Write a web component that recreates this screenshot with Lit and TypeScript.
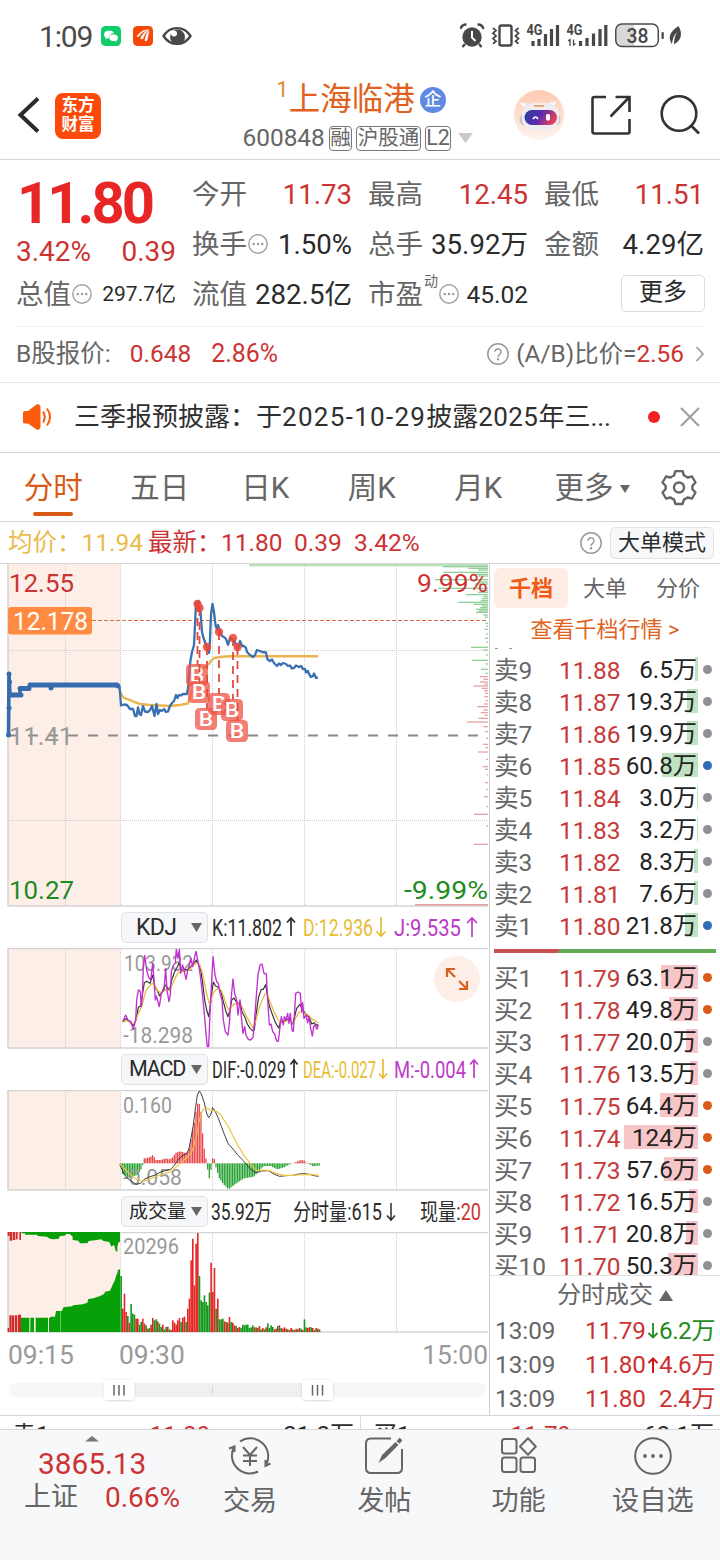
import { LitElement, html, svg, css } from "lit";
import { customElement } from "lit/decorators.js";
import { classMap } from "lit/directives/class-map.js";

type Row = [string, string, string, number, string];

const SELLS: Row[] = [
  ["卖9", "11.88", "6.5万", 3, "g"],
  ["卖8", "11.87", "19.3万", 11, "g"],
  ["卖7", "11.86", "19.9万", 11, "g"],
  ["卖6", "11.85", "60.8万", 36, "b"],
  ["卖5", "11.84", "3.0万", 1, "g"],
  ["卖4", "11.83", "3.2万", 1, "g"],
  ["卖3", "11.82", "8.3万", 4, "g"],
  ["卖2", "11.81", "7.6万", 4, "g"],
  ["卖1", "11.80", "21.8万", 13, "b"],
];
const BUYS: Row[] = [
  ["买1", "11.79", "63.1万", 37, "o"],
  ["买2", "11.78", "49.8万", 29, "o"],
  ["买3", "11.77", "20.0万", 12, "g"],
  ["买4", "11.76", "13.5万", 8, "g"],
  ["买5", "11.75", "64.4万", 38, "o"],
  ["买6", "11.74", "124万", 74, "o"],
  ["买7", "11.73", "57.6万", 34, "o"],
  ["买8", "11.72", "16.5万", 9, "g"],
  ["买9", "11.71", "20.8万", 12, "g"],
  ["买10", "11.70", "50.3万", 30, "g"],
];

const DEPTH_GREEN = [
  [20, 136], [25, 59], [30, 30], [37, 134], [43, 50], [48, 30], [59, 159], [66, 25], [72, 40], [85, 150],
  [92, 20], [97, 30], [104, 66], [110, 14], [116, 19], [122, 22], [127, 89], [133, 42], [138, 18], [143, 24],
  [148, 36], [153, 28], [157, 36], [165, 14], [172, 10], [190, 8], [198, 6], [208, 10], [222, 6], [235, 9],
  [246, 6], [262, 51], [270, 14], [285, 6], [301, 48], [312, 8], [328, 21], [340, 8],
];
const DEPTH_RED = [
  [350, 24], [358, 14], [366, 24], [372, 10], [378, 44], [385, 19], [392, 12], [400, 9], [410, 12], [422, 8],
  [432, 12], [440, 32], [450, 14], [458, 22], [466, 10], [475, 29], [486, 63], [500, 14], [515, 9], [535, 6],
  [553, 14], [563, 8], [576, 30], [598, 6], [620, 16], [628, 9], [645, 4], [668, 9], [688, 5], [710, 12],
  [740, 5], [763, 42], [798, 6], [853, 42],
];

/* KDJ curves, in thirds of a pixel */
const J_LINE =
  "68,365 77,345 85,362 92,364 100,388 107,360 110,300 115,270 121,274 124,320 127,290 130,200 134,166 140,210 146,232 152,240 158,190 161,225 166,300 169,288 178,320 184,280 192,270 197,205 201,270 207,305 211,285 214,215 220,195 226,190 229,148 234,175 238,148 242,220 248,195 253,215 258,238 263,212 268,195 273,175 278,200 282,180 288,154 294,185 300,220 306,270 312,330 318,400 322,440 326,440 330,340 335,240 339,170 345,225 350,245 355,250 360,280 366,300 370,360 376,395 384,405 388,370 393,300 399,237 404,280 410,300 414,345 420,300 424,350 429,400 434,380 438,405 445,418 452,420 459,412 463,370 468,300 474,225 480,195 486,192 492,220 499,222 503,300 508,375 513,372 518,395 524,402 530,423 535,424 539,390 544,350 550,375 553,350 558,360 563,340 567,370 571,340 576,390 580,395 584,330 587,280 594,276 601,280 605,335 608,308 612,355 618,345 623,368 627,350 632,385 637,408 641,380 645,374 651,388 655,375";
const K_LINE =
  "68,365 78,356 90,366 100,376 108,360 115,322 122,318 127,285 133,248 140,244 150,250 158,225 165,262 172,272 179,288 187,275 195,255 202,262 208,272 216,238 224,215 232,200 238,188 245,212 252,208 262,210 272,200 282,190 289,180 296,192 302,208 308,250 314,300 320,330 326,350 330,325 335,280 340,246 347,258 355,262 364,278 370,305 378,335 384,350 390,330 395,300 402,294 408,304 415,312 420,305 426,335 434,350 442,372 450,385 458,392 463,390 468,345 476,290 484,268 490,268 497,254 502,285 508,318 516,340 524,362 532,378 537,384 541,365 548,368 555,362 563,358 571,362 578,372 584,350 590,325 600,313 606,326 612,335 620,345 628,352 635,372 642,368 650,376 655,374";
const D_LINE =
  "68,366 80,362 92,366 102,372 112,348 124,322 130,300 138,272 148,258 158,250 165,256 172,272 182,278 192,272 200,268 208,272 216,256 224,238 234,218 244,214 256,214 268,210 280,196 290,188 300,196 308,222 316,262 322,290 328,310 333,300 340,278 348,270 356,264 364,272 372,292 380,318 388,332 394,322 402,312 410,312 420,308 430,328 440,350 450,368 460,384 468,360 478,322 486,302 495,282 502,280 508,300 516,320 526,344 536,362 545,368 556,364 568,362 580,370 588,352 598,336 606,338 616,340 626,346 636,358 646,362 655,370";

const PRICE =
  "119.5,686 121,705.500 124,704.500 127,705 130,709 133,709 135,716 136.500,716 138,707.500 139.500,714 141,715 143,706 145,711.500 148,712 150,710 152,706 153.500,712 154.500,716 156.500,704 158,714 160,710 162,711 164,709 166,712 168,711.500 170,706 172,703 174,701 176,695 177.500,698 179,695 181,695.500 183,694 187,694 188,688 189.500,670 190.500,660 192,652 194,645 195,625 196,603 198.500,601 200.500,612 202,632 203.500,638 206,645 208,650 209,653 210,640 211,614 212.500,604 214,612 215.500,625 217,630 218,625 220,632 222,636 224,637 226,639 228,645 230,638 232,639 234,640 236,645 238,649 240,641 242,646 244,646 246,648 247,652 250,655 253,657 255,655 257,650 260,651 262,652 266,652.500 267.500,659.500 270,661 272,659.500 274,663 277,666 279,663.500 281,665 283,663 286,664 288,666 290,665.500 292,668.500 294,668 296,665.500 299,667 301,666 303,669 305,669 306,672.500 308,671 309,674 311,677 313,676 314,673.500 316,678 318,677.500";

/* Bar height and direction in thirds of a pixel, one bar each 5 units from x = 361 */
const VOLUME =
  "168g 70r 115r 60r 48g 28r 84g 55g 52g 40r 40r 22g 30g 40r 25r 20g 10r 12g 22r 42r 35g 38g 32r 25g 15g 22r 8g 15g 16r 8g 6r 35r 28r 22r 35r 42r 30g 43r 46r 30g 70r 100r 215r 280r 140r 265r 297r 168g 95g 90g 110g 90g 80g 118g 208r 120r 192r 70g 100r 38g 38g 40g 32r 30r 28g 45r 30g 28r 20r 18g 12r 15r 12g 22g 20g 22g 22g 12g 14g 20g 14r 14g 12r 18r 8g 12r 8g 14r 26g 12g 20g 15g 8r 10r 18g 20r 12g 10r 14r 10r 8g 6r 12r 8g 6r 10r 8g 12r 10g 6r 38g 14g 12r 15r 14g 12r 6g 12r 10g 8r"
    .split(" ")
    .map((s, i) => ({ x: 361 + i * 5, h: parseInt(s, 10), up: s.endsWith("r") }));

const MACD_KNOTS = [
  [359, -4], [366, -32], [375, -38], [392, -46], [400, -38], [410, -35], [424, -14], [427, 0], [431, 15], [440, 16],
  [450, 20], [458, 26], [464, 10], [480, 10], [496, 15], [506, 12], [516, 18], [526, 32], [540, 36], [558, 30],
  [566, 45], [575, 95], [583, 130], [589, 180], [596, 178], [602, 150], [608, 60], [615, 22], [619, -8], [626, -45],
  [632, -14], [634, 10], [638, 20], [644, 6], [646, -12], [656, -45], [668, -62], [684, -78], [700, -65], [730, -45],
  [760, -40], [775, -22], [790, -8], [810, -8], [830, -18], [850, -12], [865, -4], [876, 0], [884, 3], [900, 10],
  [912, 8], [918, 0], [928, -3], [938, -9], [958, -6],
];
const macdBars = () => {
  const out: { x: number; h: number }[] = [];
  for (let x = 361; x < 958; x += 5) {
    const i = MACD_KNOTS.findIndex((k) => k[0] > x);
    const [x0, h0] = MACD_KNOTS[i - 1];
    const [x1, h1] = MACD_KNOTS[i];
    out.push({ x, h: h0 + ((h1 - h0) * (x - x0)) / (x1 - x0) });
  }
  return out;
};

const MARKS = [
  [197.5, 604, 197, 675], [199.5, 608, 199, 692], [207, 647, 206, 719],
  [219, 632, 219, 704], [233, 638, 232, 710], [237.5, 647, 237, 731],
];

const vGrid = (top: number, bottom: number) => svg`
  ${[65.5, 120.5, 212.5, 304.5, 396.5].map(
    (x) => svg`<line class="grid" x1=${x} x2=${x} y1=${top} y2=${bottom} />`,
  )}`;

const fitted = (x: number, y: number, len: number, cls: string, text: string) => svg`
  <text class=${cls} x=${x} y=${y} textLength=${len} lengthAdjust="spacingAndGlyphs">${text}</text>`;

const ellipsisIcon = html`<svg class="dots" viewBox="0 0 22 22">
  <circle cx="11" cy="11" r="9.200" fill="none" stroke="#a2a2a2" stroke-width="1.400" />
  <circle cx="6.700" cy="11" r="1.200" /><circle cx="11" cy="11" r="1.200" /><circle cx="15.300" cy="11" r="1.200" />
</svg>`;

const helpIcon = html`<svg class="help" viewBox="0 0 24 24" fill="none" stroke="#999" stroke-width="1.500">
  <circle cx="12" cy="12" r="10.200" />
  <path d="M9 9.800a3 3 0 1 1 4.700 2.500c-1.200.8-1.700 1.300-1.700 2.600" />
  <circle cx="12" cy="17.300" r=".5" fill="#999" />
</svg>`;

@customElement("app-root")
export class AppRoot extends LitElement {
  static styles = css`
    :host {
      display: block;
      width: 720px;
      height: 1560px;
      overflow: hidden;
      background: #fff;
      color: #666;
      font-family: Roboto, "Noto Sans CJK SC", sans-serif;
      font-size: 27px;
      line-height: 1;
    }
    * { box-sizing: border-box; }
    svg { display: block; flex: none; }
    .row { display: flex; align-items: center; white-space: nowrap; }
    .red { color: #cc3333; }
    .dark { color: #2b2b2b; }
    .grow { flex: 1; }

    .status { height: 72px; padding: 0 38px 0 39px; color: #4a4a4a; }
    .clock { width: 62px; padding-top: 1px; font-size: 30px; letter-spacing: -1.200px; }

    .header { height: 88px; padding-left: 16px; border-bottom: 1px solid #d6d6d6; }
    .logo {
      display: grid;
      place-content: center;
      width: 46px;
      height: 46px;
      margin-left: 14px;
      border-radius: 8px;
      background: #fc4a0b;
      color: #fff;
      font-size: 16.500px;
      font-weight: 700;
      line-height: 18.500px;
    }
    .title { display: flex; flex-direction: column; align-items: center; width: 301px; margin-left: 108px; }
    .name { display: flex; align-items: center; height: 42px; padding: 2px 0 0 3px; color: #e0601c; font-size: 31.500px; }
    .name sup { align-self: flex-start; margin: -1px 0 0 0; font-size: 22px; line-height: 1; color: #e08a30; }
    .badge { width: 26px; height: 26px; margin-left: 5px; border-radius: 50%; background: #6089e2; color: #fff; font-size: 17px; font-weight: 500; text-align: center; line-height: 25px; }
    .codes { display: flex; align-items: center; gap: 4px; height: 34px; padding: 3px 3px 0 0; font-size: 24.400px; }
    .codes b { font-weight: 400; font-size: 20.500px; line-height: 22px; padding: 0 .5px; border: 1.500px solid #777; border-radius: 4px; height: 25px; }
    .codes .l2 { font-size: 21.500px; }

    .quote { display: grid; grid-template-columns: repeat(4, 160px); column-gap: 16px; height: 166px; margin-left: 16px; padding-top: 9px; }
    .cell { display: flex; align-items: center; justify-content: space-between; height: 50px; white-space: nowrap; font-size: 27.600px; }
    .cell.main { height: 66px; }
    .cell.change { height: 34px; color: #cc3333; font-size: 28px; }
    .cell .v { padding-top: 1px; }
    .price { padding: 1px 0 0 1px; color: #e92626; font-size: 58px; font-weight: 700; letter-spacing: -3px; }
    .cell .label { display: flex; align-items: center; padding-top: 1px; font-size: 27.500px; }
    .cell .sm { font-size: 21px; }
    .cell .md { font-size: 24.500px; padding-top: 2px; }
    .label sup { align-self: flex-start; font-size: 14px; line-height: 1; margin: -7px 0 0 1px; }
    .dots { width: 22px; height: 22px; margin-top: -2px; fill: #999; }
    .more { width: 84px; height: 37px; margin: -1px -1px 0 auto; border: 1px solid #d9dbde; border-radius: 5px; color: #2b2b2b; font-size: 24px; text-align: center; line-height: 33px; }

    .bshare { height: 56px; padding: 0 15px 0 16px; font-size: 24.500px; background: linear-gradient(#f0f0f0, #f0f0f0) 16px 0 / 688px 1px no-repeat; }
    .bshare .b1 { margin-left: 19px; } .bshare .b2 { margin-left: 20px; font-size: 24.900px; }
    .bshare .ratio { margin-left: 6px; font-size: 24.400px; }
    .help { width: 24px; height: 24px; }
    .notice { height: 70px; padding: 0 20px 1px 22px; border-top: 1px solid #e6e6e6; color: #2f2f2f; font-size: 26px; }
    .notice .text { width: 580px; padding-left: 22px; }
    .notice .date { letter-spacing: 1.300px; }
    .notice .year { letter-spacing: .4px; }
    .notice .dot { width: 12px; height: 12px; border-radius: 50%; background: #f02323; }

    .tabs { height: 69px; padding-top: 4px; border-top: 1px solid #d6d6d6; font-size: 29.500px; }
    .tab { position: relative; width: 106.500px; text-align: center; }
    .tab.latin { left: -1px; }
    .tab.on { color: #d95a16; }
    .tab.on::after { content: ""; position: absolute; left: 33px; bottom: -12px; width: 40px; height: 4px; border-radius: 2px; background: #d95a16; }
    .tab.drop { display: flex; align-items: center; gap: 6px; width: 113px; padding-left: 22px; }

    .latest { height: 43px; padding: 1px 6px 0 8px; border: solid #d6d6d6; border-width: 1px 0; font-size: 24.500px; color: #cc3333; }
    .latest .avg { color: #e8bc4c; width: 140px; }
    .latest .lbl { width: 73px; }
    .latest .v1 { width: 73px; } .latest .v2 { width: 60px; }
    .big { width: 104px; height: 32px; margin-left: 7px; border: 1px solid #dfe1e5; border-radius: 5px; background: #f7f8fa; color: #2b2b2b; font-size: 22px; text-align: center; line-height: 30px; }

    .board { display: flex; height: 852px; border-bottom: 1px solid #d6d6d6; }
    .charts { width: 490px; border-right: 1px solid #d0d0d0; }
    .grid { stroke: #cccccc; stroke-width: 1; stroke-dasharray: 1 1; }
    .frame { stroke: #d4d4d4; stroke-width: 1.500; fill: none; }
    .pink { fill: #fdeee8; }
    .axis { font-size: 26.500px; }
    .t-red { fill: #cc3333; } .t-green { fill: #1e8c1e; } .t-grey { fill: #999; } .t-dark { fill: #2b2b2b; }
    .t-yellow { fill: #e8bc33; } .t-mag { fill: #bb3cc8; } .t-white { fill: #fff; }
    .legend { font-size: 23px; }
    .peak { font-size: 21.500px; }
    .indicator { height: 41px; padding-left: 121px; }
    .indicator svg { margin-left: 3px; }
    .select { display: flex; align-items: center; justify-content: space-between; width: 87px; height: 31px; padding: 0 5px 1px 7px; border: 1px solid #dfe1e6; border-radius: 5px; background: #f6f7f9; color: #2b2b2b; font-size: 21.500px; letter-spacing: -1.200px; }
    .select.k { padding-left: 14px; font-size: 23px; letter-spacing: -.6px; }
    .select.v { font-size: 19px; letter-spacing: 0; }
    .times { height: 45px; padding: 0 1px 0 8px; color: #999; font-size: 26.400px; }
    .times .t1 { width: 111px; }

    .side { width: 230px; }
    .modes { height: 48px; padding: 4px; font-size: 22px; }
    .mode { width: 73px; height: 40px; padding-left: 1px; border-radius: 6px; text-align: center; line-height: 41px; }
    .mode.on { width: 74px; padding: 0; background: #feede4; color: #f05a14; font-weight: 700; }
    .link { height: 36px; padding: 7px 0 0 0; color: #e0621c; font-size: 22px; text-align: center; }
    .book { height: 628px; overflow: hidden; padding: 6px 9px 0 4px; border-bottom: 1px solid #e2e2e2; position: relative; }
    .book::before { content: ""; position: absolute; left: 5px; top: 0; width: 20px; height: 1px; background: repeating-linear-gradient(90deg, #999 0 3px, transparent 3px 14px); }
    .order { display: grid; grid-template-columns: 65px 61px 78px 12px; align-items: center; height: 32px; font-size: 24.500px; white-space: nowrap; }
    .order .s, .order .p { padding-top: 2px; }
    .order .p { color: #c63a3a; }
    .qty { display: grid; height: 24px; align-items: center; color: #222; }
    .qty > * { grid-area: 1 / 1; justify-self: end; }
    .bar { height: 24px; margin-top: -2px; background: #bfe3c0; }
    .buy .bar { background: #f8c6c8; }
    .qty .n { padding: 0 1px 0 0; font-size: 24.200px; }
    .led { width: 9px; height: 9px; border-radius: 50%; margin: -2px 0 0 4.500px; background: #8f8f96; }
    .led.b { background: #2f6db8; } .led.o { background: #dc5a14; }
    .split { height: 20px; padding-top: 7px; margin: 0 -5px 0 0; }
    .split i { display: block; height: 4px; background: linear-gradient(120deg, #c75050 0 29.500%, #63aa55 29.500%); }
    .deals-head { height: 38px; padding-left: 67px; font-size: 24px; gap: 6px; }
    .deal { display: grid; grid-template-columns: 90px 62px 12px 1fr; align-items: center; height: 34px; padding: 0 5px; font-size: 24.300px; white-space: nowrap; }
    .deal .n { text-align: right; letter-spacing: -.5px; }
    .deal .n.green { color: #1e8c1e; }
    .deal svg { justify-self: center; }

    .strip { display: flex; height: 14px; overflow: hidden; color: #2b2b2b; font-size: 24px; border-bottom: 1px solid #d6d6d6; }
    .half { display: flex; width: 360px; padding: 7px 6px 0 12px; }
    .half span { width: 99px; } .half span + span { text-align: right; } .half span:last-child { flex: 1; }
    .half + .half { border-left: 1px solid #dcdcdc; }

    .nav { display: flex; height: 130px; background: #f7f8fa; }
    .index { width: 183px; padding-top: 6px; white-space: nowrap; }
    .index .pts { padding: 7px 0 0 38px; font-size: 29.800px; color: #cc3333; }
    .index .line { display: flex; align-items: center; padding: 5px 0 0 24px; font-size: 27px; }
    .index .line .red { margin-left: 27px; font-size: 28px; }
    .item { display: flex; flex-direction: column; align-items: center; width: 134.300px; padding-top: 5px; gap: 11px; font-size: 27.200px; }
  `;

  private order([label, price, qty, width, led]: Row, buy: boolean) {
    return html`<div class=${classMap({ order: true, buy })}>
      <span class="s">${label}</span><span class="p">${price}</span>
      <span class="qty"><i class="bar" style="width:${width}px"></i><span class="n">${qty}</span></span>
      <i class=${classMap({ led: true, b: led === "b", o: led === "o" })}></i>
    </div>`;
  }

  private priceChart() {
    return html`<svg width="489" height="343" viewBox="0 564 489 343">
      <rect class="pink" x="8" y="564" width="112" height="342" />
      ${vGrid(564, 906)}
      <line class="grid" x1="8" x2="488" y1="650.500" y2="650.500" />
      <line class="grid" x1="8" x2="488" y1="820.500" y2="820.500" />
      <path class="frame" d="M8 564V906H488" />
      <rect x="249" y="564" width="239" height="2.300" fill="#b9dfbb" />
      <g transform="translate(0 560) scale(1 .33333)">
        ${DEPTH_GREEN.map(([y, w]) => svg`<rect x=${488 - w / 3} y=${y - 2} width=${w / 3} height="4" fill="#93cf98" />`)}
        ${DEPTH_RED.map(([y, w]) => svg`<rect x=${488 - w / 3} y=${y - 2} width=${w / 3} height="4" fill="#e9a3a5" />`)}
      </g>
      <rect x="415" y="904" width="73" height="1.500" fill="#e5a0a0" />
      <line x1="8" x2="488" y1="620.500" y2="620.500" stroke="#d4713c" stroke-width="1.200" stroke-dasharray="4 2" />
      <line x1="8" x2="488" y1="735.500" y2="735.500" stroke="#8a8a8a" stroke-width="2" stroke-dasharray="10 10" />
      <polyline points="119,688 121,694 124,698 130,700 134,702 140,704 150,705 170,706 180,705 188,703.500 192,692 197,676 203,668 209,664 211,661 214,658 220,657 230,656.300 318,656.300" fill="none" stroke="#ecb44e" stroke-width="2.400" />
      <path d="M8.500 735L9 674L10 695H20V689H28L30 685.500" fill="none" stroke="#356cae" stroke-width="3.600" stroke-linejoin="round" />
      <path d="M10 695H21M20 688.500H29M30 685H117" fill="none" stroke="#356cae" stroke-width="5" stroke-linecap="round" />
      ${[[9, 674], [9.5, 682], [9, 708], [8.5, 735], [51, 688], [118, 686]].map(([x, y]) => svg`<circle cx=${x} cy=${y} r="2.500" fill="#356cae" />`)}
      <polyline points=${PRICE} fill="none" stroke="#3a70b2" stroke-width="2.300" stroke-linejoin="round" />
      ${MARKS.map(([x, y, bx, by]) => svg`
        <line x1=${x} y1=${y} x2=${x} y2=${by - 10} stroke="#e04a3e" stroke-width="1.800" stroke-dasharray="8 6" />
        <circle cx=${x} cy=${y} r="4.200" fill="#ee4436" opacity=".85" />
        <rect x=${bx - 11} y=${by - 11} width="22" height="22" rx="4.500" fill="#ef5445" opacity=".75" />
        <text x=${bx - 7.2} y=${by + 7.2} fill="#fff" font-size="20.500" font-weight="500" textLength="14.500" lengthAdjust="spacingAndGlyphs">B</text>`)}
      <rect x="8" y="607" width="84" height="27.500" rx="3" fill="#ff8c42" />
      ${fitted(13, 629.5, 75, "axis t-white", "12.178")}
      ${fitted(9, 592, 65, "axis t-red", "12.55")}
      ${fitted(9, 745, 64, "axis t-grey", "11.41")}
      ${fitted(9, 898.5, 65, "axis t-green", "10.27")}
      ${fitted(417, 592, 71, "axis t-red", "9.99%")}
      ${fitted(404, 898.5, 84, "axis t-green", "-9.99%")}
    </svg>`;
  }

  private kdjChart() {
    return html`<svg width="489" height="101" viewBox="0 948 489 101">
      <rect class="pink" x="8" y="948" width="112" height="100" />
      ${vGrid(948, 1048)}
      <path class="frame" d="M488 948.500H8V1048H488" />
      ${fitted(124, 970.5, 69, "peak t-grey", "103.932")}
      ${fitted(123, 1043, 70, "peak t-grey", "-18.298")}
      <g transform="translate(100 900) scale(.33333)" fill="none" stroke-linejoin="round">
        <polyline points=${K_LINE} stroke="#333" stroke-width="3.600" />
        <polyline points=${D_LINE} stroke="#e6b93e" stroke-width="3.800" />
        <polyline points=${J_LINE} stroke="#c22fd0" stroke-width="4" />
      </g>
      <circle cx="457" cy="979" r="23" fill="#fdefe8" />
      <path d="M447 977V969H455M447 969L455 977M467 981V989H459M467 989L459 981" fill="none" stroke="#d9601c" stroke-width="2.200" />
    </svg>`;
  }

  private macdChart() {
    return html`<svg width="489" height="101" viewBox="0 1090 489 101">
      <rect class="pink" x="8" y="1090" width="112" height="100" />
      ${vGrid(1090, 1190)}
      <path class="frame" d="M488 1090.500H8V1190H488" />
      ${fitted(123, 1112.5, 49, "peak t-grey", "0.160")}
      <g transform="translate(0 1050) scale(.33333)">
        ${macdBars().map(({ x, h }) => svg`<rect x=${x} y=${h > 0 ? 340 - h : 340} width="3.800" height=${Math.abs(h)} fill=${h > 0 ? "#e8474a" : "#26a030"} />`)}
      </g>
      ${fitted(123, 1185, 59, "peak t-grey", "-0.058")}
      <g transform="translate(0 1050) scale(.33333)" fill="none" stroke-linejoin="round">
        <polyline points="359,342 372,372 382,385 396,395 408,403 422,400 434,387 450,380 466,375 480,367 496,362 512,358 524,345 534,330 546,318 558,312 566,300 573,265 580,225 587,170 592,135 598,123 604,132 612,155 620,190 626,203 632,195 638,173 646,185 655,205 665,232 675,258 685,282 700,298 714,316 730,332 745,350 758,363 768,369 785,363 806,362 822,372 838,379 860,377 880,376 895,372 915,371 932,374 942,377 956,379" stroke="#333" stroke-width="2.800" />
        <polyline points="359,342 378,360 396,378 412,390 430,393 448,388 466,380 490,372 512,365 526,352 542,340 558,324 572,312 580,292 590,255 596,220 602,195 610,178 620,174 630,180 640,183 650,184 660,192 672,210 684,228 700,260 716,290 732,316 746,334 758,350 772,362 790,360 810,362 830,371 850,376 880,376 900,374 930,373 956,376" stroke="#eec23c" stroke-width="3.400" />
      </g>
    </svg>`;
  }

  private volumeChart() {
    return html`<svg width="489" height="101" viewBox="0 1232 489 101">
      <rect class="pink" x="8" y="1232" width="112" height="100" />
      ${vGrid(1232, 1332)}
      <path class="frame" d="M488 1232.500H8V1332H488" />
      ${fitted(123, 1254, 56, "peak t-grey", "20296")}
      <g transform="translate(0 1050) scale(.33333)">
        <g fill="#08a008">
          <polygon points="65,546 65,550 75,550 75,554 112,554 112,558 140,560 150,566 160,568 176,566 180,558 194,557 200,551 210,553 218,560 218,570 235,572 240,580 262,580 266,573 290,570 304,568 310,573 328,576 334,590 342,584 347,602 352,606 352,590 356,576 360,576 360,546" />
          <polygon points="60,846 60,803 150,803 152,800 165,800 168,783 186,783 190,772 216,769 220,766 248,763 262,758 265,747 280,745 300,738 312,732 315,725 330,722 340,700 345,690 348,678 352,670 354,660 360,658 360,846" />
        </g>
        <g fill="#d02c2c">
          ${[[23, 6, 558], [29, 8, 572], [39, 7, 570], [48, 5, 568], [58, 5, 570]].map(([x, w, b]) => svg`<rect x=${x} y="546" width=${w} height=${b - 546} />`)}
          ${[[23, 4, 834], [28, 7, 796], [36, 7, 796], [45, 7, 796], [54, 9, 794]].map(([x, w, t]) => svg`<rect x=${x} y=${t} width=${w} height=${846 - t} />`)}
        </g>
        <g fill="#fdeee8">
          ${[[88, 3], [102, 5], [144, 3]].map(([x, w]) => svg`<rect x=${x} y="800" width=${w} height="46" />`)}
          <rect x="181" y="783" width="2" height="63" opacity=".6" />
        </g>
        ${VOLUME.map(({ x, h, up }) => svg`<rect x=${x} y=${846 - h} width="4.800" height=${h} fill=${up ? "#e52424" : "#12981a"} />`)}
      </g>
    </svg>`;
  }

  private select(label: string, cls: string) {
    return html`<div class="select ${cls}"><span>${label}</span>
      <svg width="11" height="9" viewBox="0 0 11 9"><path d="M0 0H11L5.500 9Z" fill="#666" /></svg></div>`;
  }

  private slider() {
    return html`<svg width="489" height="36" viewBox="0 1378 489 36">
      <defs><filter id="lift" x="-20%" y="-20%" width="140%" height="150%"><feDropShadow dx="0" dy="0.500" stdDeviation="1.200" flood-opacity=".2" /></filter></defs>
      <rect x="9" y="1383" width="477" height="14" rx="7" fill="#f7f7f9" />
      <rect x="119" y="1383" width="198" height="14" fill="#f0f0f2" />
      <path d="M212.500 1386V1394M304.500 1386V1394" stroke="#d4d4d8" />
      ${[119, 317.5].map((x) => svg`
        <rect x=${x - 15.5} y="1380" width="31" height="20" rx="4" fill="#fff" filter="url(#lift)" />
        <path d="M${x - 5} 1385V1395.500M${x} 1385V1395.500M${x + 5} 1385V1395.500" stroke="#666" stroke-width="1.500" />`)}
    </svg>`;
  }

  private statusBar() {
    return html`<div class="status row">
      <span class="clock">1:09</span>
      <svg width="91" height="24" viewBox="101 24 91 24">
        <rect x="101" y="26" width="20" height="20" rx="4.500" fill="#0fce6a" />
        <path d="M109 30.500c-3 0-5 1.900-5 4 0 1.300.7 2.300 1.700 3l-.3 1.700 1.900-1 2 .3c-.5-3.300 1.800-5.300 4.700-5.300-.5-1.600-2.500-2.700-5-2.700Z" fill="#fff" />
        <path d="M113.500 34.200c-2.400 0-4.200 1.500-4.200 3.500s1.800 3.400 4.200 3.400l1.500-.2 1.700.9-.3-1.400c1-.7 1.500-1.600 1.500-2.700 0-2-2-3.500-4.400-3.500Z" fill="#fff" />
        <rect x="133" y="26" width="20" height="20" rx="4.500" fill="#f44708" />
        <path d="M137 36.500c3-5 7-6.500 11.500-6.800-5 1.500-8 3.300-9.700 6.800ZM140.500 38.500c1.500-4 4.300-6.700 8-8.200-2.800 2.300-4.500 4.700-5.700 8.700ZM145 41c0-4 1.500-7.500 4-10-1 3.500-1 6-2 9.500Z" fill="#fff" stroke="#fff" stroke-width=".5" />
        <path d="M163.500 36C170 25.500 184 25.500 190.500 36C184 46.500 170 46.500 163.500 36Z" fill="none" stroke="#484848" stroke-width="2.400" />
        <circle cx="177.500" cy="37" r="7.500" fill="#484848" /><circle cx="174" cy="33.500" r="3" fill="#fff" />
      </svg>
      <span class="grow"></span>
      <svg width="222" height="26" viewBox="460 23 222 26" fill="#484848">
        <circle cx="472" cy="37" r="9.700" />
        <path d="M460.500 29a6 6 0 0 1 6-4.500M483.500 29a6 6 0 0 0-6-4.500M465 44L462.500 47M479 44L481.500 47" fill="none" stroke="#484848" stroke-width="2.400" />
        <path d="M472 31V37.500L475.500 41" fill="none" stroke="#fff" stroke-width="2" />
        <rect x="499.500" y="25.500" width="12" height="20" rx="2" fill="none" stroke="#484848" stroke-width="2.400" />
        <path d="M493 28l3 2.500-3 2.700 3 2.700-3 2.700 3 2.700-3 2.500M518.500 28l-3 2.500 3 2.700-3 2.700 3 2.700-3 2.700 3 2.500" fill="none" stroke="#484848" stroke-width="1.800" />
        <text x="526.500" y="34.500" font-size="14.500" font-weight="700" textLength="16" lengthAdjust="spacingAndGlyphs">4G</text>
        <path d="M533 41V46M539 39V46M545.500 34V46M551.500 29V46M557.500 25V46" stroke="#484848" stroke-width="3.200" />
        <text x="566.500" y="34.500" font-size="14.500" font-weight="700" textLength="16" lengthAdjust="spacingAndGlyphs">4G</text>
        <path d="M568 41l2-1.500V46M573.500 39.500V45l2-1.500" fill="none" stroke="#484848" stroke-width="1.300" />
        <path d="M580.500 41V46M587 38V46M593.500 33.500V46M600 29V46M605.800 25V46" stroke="#484848" stroke-width="3.200" />
        <path d="M621 25H634V46H621Q616.500 46 616.500 41V30Q616.500 25 621 25Z" fill="#d8d8d8" />
        <rect x="615.800" y="24" width="42.500" height="22.500" rx="6" fill="none" stroke="#484848" stroke-width="1.500" />
        <rect x="661.500" y="32" width="2.300" height="7" rx="1" />
        <text x="626.500" y="42.500" font-size="20.500" font-weight="500" textLength="22" lengthAdjust="spacingAndGlyphs">38</text>
        <path d="M678.500 26c4 7 3.500 14-4.500 18.500 0-5 1-9 3-12.500-3 3-4.500 7-5 12C666.500 36 672 30.500 678.500 26Z" />
      </svg>
    </div>`;
  }

  private header() {
    return html`<div class="header row">
      <svg width="25" height="40" viewBox="16 96 25 40"><path d="M38 98.500L20.500 115L38 131.500" fill="none" stroke="#2b2b2b" stroke-width="4" /></svg>
      <div class="logo"><span>东方</span><span>财富</span></div>
      <div class="title">
        <div class="name"><sup>1</sup>上海临港<span class="badge">企</span></div>
        <div class="codes"><span>600848</span><b>融</b><b>沪股通</b><b class="l2">L2</b>
          <svg width="18" height="10" viewBox="0 0 18 10"><path d="M3 0H18L10.500 10Z" fill="#c9c9c9" /></svg></div>
      </div>
      <svg width="192" height="60" viewBox="510 86 192 60">
        <defs>
          <linearGradient id="halo" x1="0" y1="0" x2="0" y2="1"><stop offset="0" stop-color="#ffc9b0" /><stop offset="1" stop-color="#fff4ef" /></linearGradient>
          <linearGradient id="visor" x1="0" y1="0" x2="1" y2="0.300"><stop offset="0" stop-color="#28409a" /><stop offset=".55" stop-color="#5a2bb0" /><stop offset="1" stop-color="#e0405a" /></linearGradient>
        </defs>
        <circle cx="539" cy="115" r="25" fill="url(#halo)" />
        <path d="M519 101q2 5 5 6l4-4q-6 1-9-2ZM557 100q-1 5-4 6l-4-4q5 1 8-2Z" fill="#fff" stroke="#e3dada" stroke-width=".7" />
        <rect x="519.500" y="113" width="41" height="13" rx="6" fill="#c9c6d0" />
        <rect x="522" y="103" width="37" height="27.500" rx="12" fill="#f0edf0" />
        <rect x="534" y="105" width="10" height="1.800" fill="#e8a070" />
        <rect x="524.500" y="110" width="32.500" height="15" rx="7.500" fill="url(#visor)" />
        <path d="M533 119q2.500-4 5 0" fill="none" stroke="#fff" stroke-width="1.600" /><rect x="546" y="114" width="4" height="6.500" rx="1.500" fill="#fff" />
        <path d="M606 97H594.500Q592.500 97 592.500 99V131.500Q592.500 133.500 594.500 133.500H627.500Q629.500 133.500 629.500 131.500V119M615.500 97H629.500V112M629 97.500L610.500 116.500" fill="none" stroke="#333" stroke-width="2.600" />
        <circle cx="679" cy="113.500" r="17.300" fill="none" stroke="#333" stroke-width="2.600" /><path d="M691 125.500L699 133.500" stroke="#333" stroke-width="2.600" />
      </svg>
    </div>`;
  }

  private quote() {
    const cell = (label: unknown, value: string, cls: string) =>
      html`<div class="cell"><span class="label">${label}</span><span class="v ${cls}">${value}</span></div>`;
    return html`<div class="quote">
      <div>
        <div class="cell main"><span class="price">11.80</span></div>
        <div class="cell change"><span>3.42%</span><span>0.39</span></div>
        ${cell(html`总值${ellipsisIcon}`, "297.7亿", "dark sm")}
      </div>
      <div>${cell("今开", "11.73", "red")}${cell(html`换手${ellipsisIcon}`, "1.50%", "dark")}${cell("流值", "282.5亿", "dark")}</div>
      <div>${cell("最高", "12.45", "red")}${cell("总手", "35.92万", "dark")}${cell(html`市盈<sup>动</sup>${ellipsisIcon}`, "45.02", "dark md")}</div>
      <div>${cell("最低", "11.51", "red")}${cell("金额", "4.29亿", "dark")}<div class="cell"><span class="more">更多</span></div></div>
    </div>`;
  }

  private nav() {
    return html`<div class="nav">
      <div class="index">
        <svg width="183" height="6" viewBox="0 0 183 6"><path d="M85 5.500L92 0L99 5.500Z" fill="#777" /></svg>
        <div class="pts">3865.13</div>
        <div class="line"><span>上证</span><span class="red">0.66%</span></div>
      </div>
      <div class="item">
        <svg width="44" height="42" viewBox="0 0 44 42" fill="none" stroke="#666" stroke-width="2"><path d="M12 6.500A18 18 0 0 1 38 30M30 36.500A18 18 0 0 1 6 12M1 13.500L6.500 11.500V17M37.500 25V31L42.500 28.500M15 12L22 20L29 12M22 20V31M15 20.500H29M15 26H29" /></svg>
        <span>交易</span>
      </div>
      <div class="item">
        <svg width="44" height="42" viewBox="0 0 44 42" fill="none" stroke="#666" stroke-width="2"><path d="M29 3.500H9Q4 3.500 4 8.500V33Q4 38 9 38H35Q40 38 40 33V14" /><path d="M16.500 28L20 20L33.500 7L36.500 10L23.500 23Z" fill="#666" stroke="none" /><path d="M36 4.500L39 7" stroke-width="4.500" /></svg>
        <span>发帖</span>
      </div>
      <div class="item">
        <svg width="44" height="42" viewBox="0 0 44 42" fill="none" stroke="#666" stroke-width="2"><rect x="5" y="4" width="14.500" height="14.500" rx="2.500" /><rect x="5" y="22.500" width="14.500" height="14.500" rx="2.500" /><rect x="23.500" y="22.500" width="14.500" height="14.500" rx="2.500" /><path d="M31 3.200L38.800 11.500L31 19.800L23 11.500Z" stroke-linejoin="round" /></svg>
        <span>功能</span>
      </div>
      <div class="item">
        <svg width="44" height="42" viewBox="0 0 44 42" fill="none" stroke="#666" stroke-width="2"><circle cx="22" cy="21" r="17.800" /><g fill="#666" stroke="none"><circle cx="14" cy="21" r="1.900" /><circle cx="22" cy="21" r="1.900" /><circle cx="30" cy="21" r="1.900" /></g></svg>
        <span>设自选</span>
      </div>
    </div>`;
  }

  render() {
    return html`
      ${this.statusBar()} ${this.header()} ${this.quote()}
      <div class="bshare row">
        <span>B股报价:</span><span class="red b1">0.648</span><span class="red b2">2.86%</span>
        <span class="grow"></span>${helpIcon}
        <span class="ratio">(A/B)比价=<span class="red">2.56</span></span>
        <svg width="21" height="18" viewBox="1 0 21 18"><path d="M13.500 2L20 9L13.500 16" fill="none" stroke="#999" stroke-width="1.600" /></svg>
      </div>
      <div class="notice row">
        <svg width="30" height="26" viewBox="22 404 30 26">
          <path d="M23 412.500Q23 411 25 411H28L36.500 404.500Q40.500 403.500 40.500 408V426Q40.500 430.500 36.500 429.500L28 423.500H25Q23 423.500 23 422Z" fill="#fc5b0c" />
          <path d="M43 411.500q3.500 5.500 0 11M47 408.500q6 8.500 0 17" fill="none" stroke="#fc5b0c" stroke-width="2" />
        </svg>
        <span class="text">三季报预披露：于<span class="date">2025-10-29</span>披露<span class="year">2025</span>年三...</span>
        <span class="grow"></span><i class="dot"></i>
        <svg width="40" height="22" viewBox="-2 0 40 22"><path d="M19 2L37 20M37 2L19 20" stroke="#a0a0a0" stroke-width="2.200" /></svg>
      </div>
      <div class="tabs row">
        <span class="tab on">分时</span><span class="tab">五日</span><span class="tab latin">日K</span><span class="tab latin">周K</span><span class="tab latin">月K</span>
        <span class="tab drop">更多<svg width="10" height="8" viewBox="0 0 10 8"><path d="M0 0H10L5 8Z" fill="#666" /></svg></span>
        <svg width="70" height="38" viewBox="646 470 70 38" fill="none" stroke="#666" stroke-width="2.400" stroke-linejoin="round">
          <path d="M675.500 471H682.500L684 475.500Q686 476.300 687.500 477.500L692 476.500L695.500 482.500L692.300 486Q692.500 487.500 692.300 489L695.500 492.500L692 498.500L687.500 497.500Q686 498.800 684 499.500L682.500 504H675.500L674 499.500Q672 498.800 670.500 497.500L666 498.500L662.500 492.500L665.700 489Q665.500 487.500 665.700 486L662.500 482.500L666 476.500L670.500 477.500Q672 476.300 674 475.500Z" />
          <circle cx="679" cy="487.500" r="5" />
        </svg>
      </div>
      <div class="latest row">
        <span class="avg">均价：11.94</span><span class="lbl">最新：</span><span class="v1">11.80</span><span class="v2">0.39</span><span>3.42%</span>
        <span class="grow"></span>${helpIcon}<span class="big">大单模式</span>
      </div>
      <div class="board">
        <div class="charts">
          ${this.priceChart()}
          <div class="indicator row">${this.select("KDJ", "k")}
            <svg width="278" height="32" viewBox="211 911 278 32">
              ${fitted(212, 935, 70, "legend t-dark", "K:11.802")}${fitted(303, 935, 70, "legend t-yellow", "D:12.936")}${fitted(394, 935, 67, "legend t-mag", "J:9.535")}
              <path d="M291 935V917M287 921.500L291 917L295 921.500" fill="none" stroke="#2b2b2b" stroke-width="1.700" />
              <path d="M381 916V935M376.500 930.500L381 935L385.500 930.500" fill="none" stroke="#e8bc33" stroke-width="1.700" />
              <path d="M472 936V917M467 922L472 917L477 922" fill="none" stroke="#bb3cc8" stroke-width="1.700" />
            </svg>
          </div>
          ${this.kdjChart()}
          <div class="indicator row">${this.select("MACD", "m")}
            <svg width="278" height="32" viewBox="211 1053 278 32">
              ${fitted(212, 1077, 74, "legend t-dark", "DIF:-0.029")}${fitted(303, 1077, 73, "legend t-yellow", "DEA:-0.027")}${fitted(394, 1077, 72, "legend t-mag", "M:-0.004")}
              <path d="M294 1077V1059M290.500 1063.500L294 1059L297.500 1063.500" fill="none" stroke="#2b2b2b" stroke-width="1.700" />
              <path d="M383 1058V1077M379 1072.500L383 1077L387 1072.500" fill="none" stroke="#e8bc33" stroke-width="1.700" />
              <path d="M474 1077V1059M470 1063.500L474 1059L478 1063.500" fill="none" stroke="#bb3cc8" stroke-width="1.700" />
            </svg>
          </div>
          ${this.macdChart()}
          <div class="indicator row">${this.select("成交量", "v")}
            <svg width="278" height="32" viewBox="211 1195 278 32">
              ${fitted(211, 1219, 61, "legend t-dark", "35.92万")}${fitted(293, 1219, 89, "legend t-dark", "分时量:615")}
              <text class="legend t-dark" x="420" y="1219" textLength="61" lengthAdjust="spacingAndGlyphs">现量:<tspan class="t-red">20</tspan></text>
              <path d="M391 1202V1219M387 1214.500L391 1219L395 1214.500" fill="none" stroke="#2b2b2b" stroke-width="1.500" />
            </svg>
          </div>
          ${this.volumeChart()}
          <div class="times row"><span class="t1">09:15</span><span>09:30</span><span class="grow"></span><span>15:00</span></div>
          ${this.slider()}
        </div>
        <div class="side">
          <div class="modes row"><span class="mode on">千档</span><span class="mode">大单</span><span class="mode">分价</span></div>
          <div class="link">查看千档行情 &gt;</div>
          <div class="book">
            ${SELLS.map((r) => this.order(r, false))}
            <div class="split"><i></i></div>
            ${BUYS.map((r) => this.order(r, true))}
          </div>
          <div class="deals-head row">分时成交<svg width="14" height="11" viewBox="0 0 14 11"><path d="M7 0L14 11H0Z" fill="#666" /></svg></div>
          <div class="deal"><span>13:09</span><span class="red">11.79</span><svg width="12" height="16" viewBox="0 0 12 16"><path d="M6 0V15M1.500 10L6 14.500L10.500 10" fill="none" stroke="#1e8c1e" stroke-width="1.800" /></svg><span class="n green">6.2万</span></div>
          <div class="deal"><span>13:09</span><span class="red">11.80</span><svg width="12" height="16" viewBox="0 0 12 16"><path d="M6 16V1M1.500 6L6 1.500L10.500 6" fill="none" stroke="#d01818" stroke-width="2" /></svg><span class="n red">4.6万</span></div>
          <div class="deal"><span>13:09</span><span class="red">11.80</span><span></span><span class="n red">2.4万</span></div>
        </div>
      </div>
      <div class="strip">
        <div class="half"><span>卖1</span><span class="red">11.80</span><span>21.8万</span></div>
        <div class="half"><span>买1</span><span class="red">11.79</span><span>63.1万</span></div>
      </div>
      ${this.nav()}
    `;
  }
}
